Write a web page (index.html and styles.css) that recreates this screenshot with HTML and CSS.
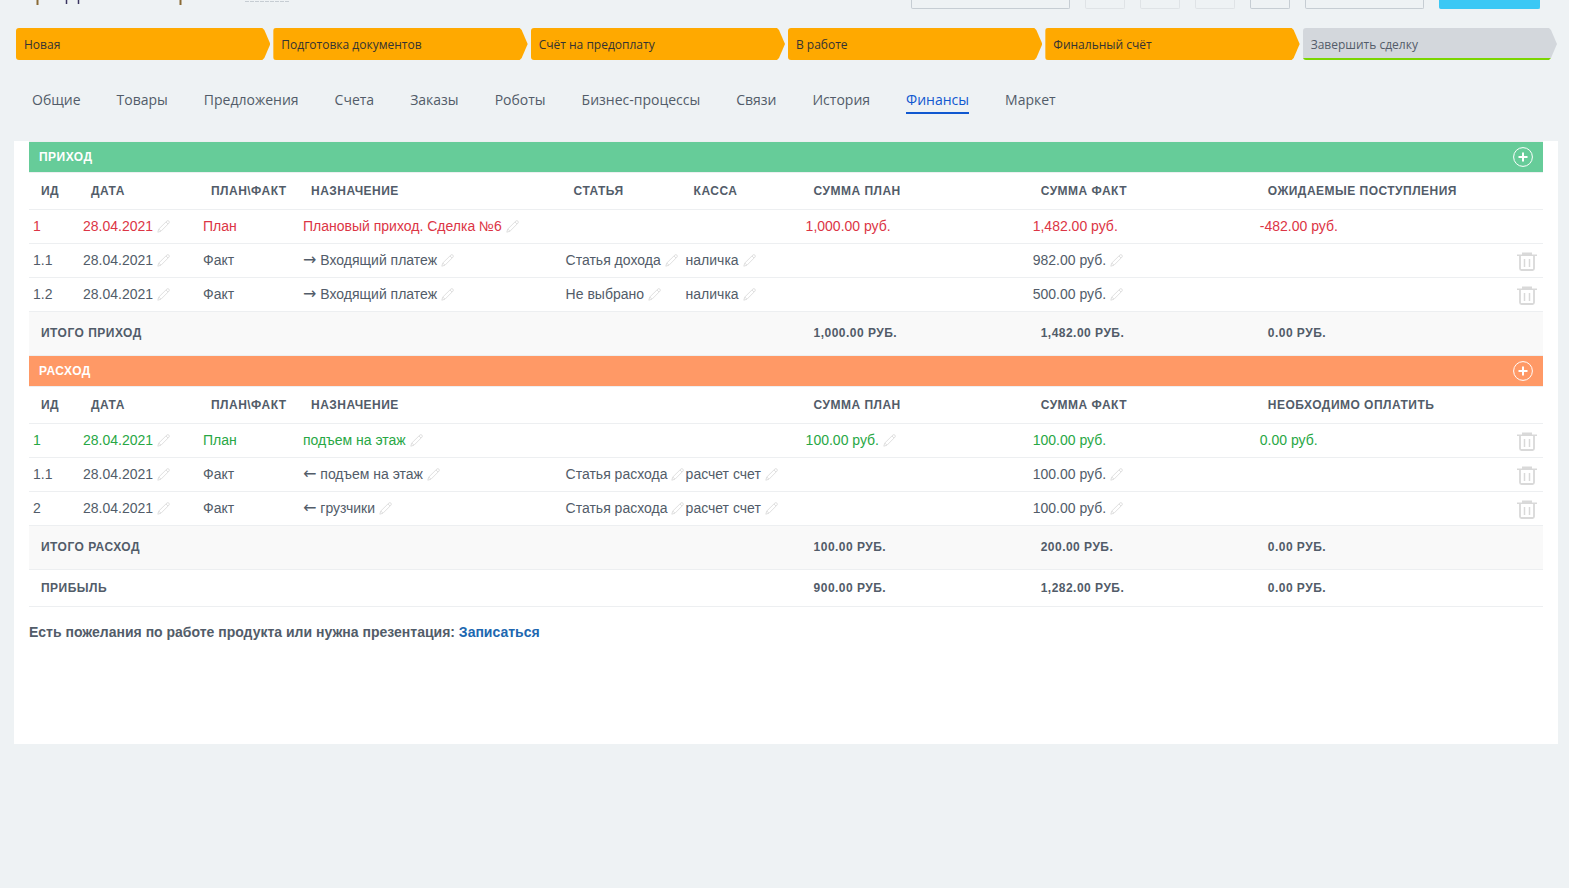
FILE: index.html
```html
<!DOCTYPE html>
<html lang="ru">
  <head>
    <meta charset="utf-8">
    <title>Сделка: финансы</title>
    <link rel="stylesheet" href="styles.css">
  </head>
  <body>
    <svg class="sprite" aria-hidden="true">
      <symbol id="pencil" viewBox="0 0 13 13">
        <path d="M0.800 12.200L1.800 9L10 0.900Q11 0.300 11.900 1.100Q12.700 2 12.100 3L4 11.200zM1.800 9L4 11.200M9 2l2 2" fill="none" stroke="#dcdcdc" stroke-width="0.900" stroke-linejoin="round"/>
      </symbol>
      <symbol id="trash" viewBox="0 0 20 19">
        <path d="M5 0.500h10v2h5v1.500H0V2.500h5z" fill="#d9d9d9"/>
        <path d="M3 3.500V16.500q0 1.500 1.500 1.500h11q1.500 0 1.500-1.500V3.500" fill="none" stroke="#d9d9d9" stroke-width="1.800"/>
        <path d="M7.500 7v8M12.500 7v8" stroke="#d9d9d9" stroke-width="1.500"/>
      </symbol>
      <symbol id="plus" viewBox="0 0 20 20">
        <circle cx="10" cy="10" r="9.400" fill="none" stroke="#fff"/>
        <path d="M10 5.500v9M5.500 10h9" stroke="#fff" stroke-width="2"/>
      </symbol>
    </svg>

    <header class="toolbar">
      <svg class="title-mark" width="260" height="6" viewBox="0 0 260 6" aria-hidden="true">
        <path d="M8.500 0v5M151.500 0v5" stroke="#8a6a35" stroke-width="2"/>
        <path d="M37.500 0v4M49.500 0v4" stroke="#3b3560" stroke-width="1.500"/>
        <path d="M216 1.500h44" stroke="#c6cdd3" stroke-dasharray="4 1"/>
      </svg>
      <button class="tool tool-wide" aria-label="Документ"></button>
      <button class="tool tool-light" aria-label="Печать"></button>
      <button class="tool tool-light" aria-label="Почта"></button>
      <button class="tool tool-light" aria-label="Звонок"></button>
      <button class="tool" aria-label="Настройки"></button>
      <button class="tool tool-medium" aria-label="Сделка"></button>
      <button class="tool tool-primary" aria-label="Маркет"></button>
    </header>

    <div class="stages">
      <button class="stage">Новая</button>
      <button class="stage">Подготовка документов</button>
      <button class="stage">Счёт на предоплату</button>
      <button class="stage">В работе</button>
      <button class="stage">Финальный счёт</button>
      <button class="stage stage-final">Завершить сделку</button>
    </div>

    <nav class="tabs">
      <a href="#">Общие</a>
      <a href="#">Товары</a>
      <a href="#">Предложения</a>
      <a href="#">Счета</a>
      <a href="#">Заказы</a>
      <a href="#">Роботы</a>
      <a href="#">Бизнес-процессы</a>
      <a href="#">Связи</a>
      <a href="#">История</a>
      <a href="#" class="active">Финансы</a>
      <a href="#">Маркет</a>
    </nav>

    <main class="panel">
      <table class="finance">
        <colgroup>
          <col class="col-id">
          <col class="col-date">
          <col class="col-type">
          <col>
          <col class="col-item">
          <col class="col-item">
          <col class="col-sum">
          <col class="col-sum">
          <col class="col-sum">
          <col class="col-actions">
        </colgroup>
        <tbody>
          <tr class="band band-income">
            <th colspan="10">
              <div class="band-inner">Приход <button class="icon" aria-label="Добавить приход"><svg width="20" height="20"><use href="#plus"/></svg></button></div>
            </th>
          </tr>
          <tr class="head">
            <th>ИД</th>
            <th>Дата</th>
            <th>План\Факт</th>
            <th>Назначение</th>
            <th>Статья</th>
            <th>Касса</th>
            <th>Сумма план</th>
            <th>Сумма факт</th>
            <th colspan="2">Ожидаемые поступления</th>
          </tr>
          <tr class="red">
            <td>1</td>
            <td>28.04.2021 <button class="icon" aria-label="Изменить"><svg width="13" height="13"><use href="#pencil"/></svg></button></td>
            <td>План</td>
            <td>Плановый приход. Сделка №6 <button class="icon" aria-label="Изменить"><svg width="13" height="13"><use href="#pencil"/></svg></button></td>
            <td></td>
            <td></td>
            <td>1,000.00 руб.</td>
            <td>1,482.00 руб.</td>
            <td>-482.00 руб.</td>
            <td></td>
          </tr>
          <tr>
            <td>1.1</td>
            <td>28.04.2021 <button class="icon" aria-label="Изменить"><svg width="13" height="13"><use href="#pencil"/></svg></button></td>
            <td>Факт</td>
            <td><span class="arrow">→</span> Входящий платеж <button class="icon" aria-label="Изменить"><svg width="13" height="13"><use href="#pencil"/></svg></button></td>
            <td>Статья дохода <button class="icon" aria-label="Изменить"><svg width="13" height="13"><use href="#pencil"/></svg></button></td>
            <td>наличка <button class="icon" aria-label="Изменить"><svg width="13" height="13"><use href="#pencil"/></svg></button></td>
            <td></td>
            <td>982.00 руб. <button class="icon" aria-label="Изменить"><svg width="13" height="13"><use href="#pencil"/></svg></button></td>
            <td></td>
            <td class="actions"><button class="icon" aria-label="Удалить"><svg width="20" height="19"><use href="#trash"/></svg></button></td>
          </tr>
          <tr>
            <td>1.2</td>
            <td>28.04.2021 <button class="icon" aria-label="Изменить"><svg width="13" height="13"><use href="#pencil"/></svg></button></td>
            <td>Факт</td>
            <td><span class="arrow">→</span> Входящий платеж <button class="icon" aria-label="Изменить"><svg width="13" height="13"><use href="#pencil"/></svg></button></td>
            <td>Не выбрано <button class="icon" aria-label="Изменить"><svg width="13" height="13"><use href="#pencil"/></svg></button></td>
            <td>наличка <button class="icon" aria-label="Изменить"><svg width="13" height="13"><use href="#pencil"/></svg></button></td>
            <td></td>
            <td>500.00 руб. <button class="icon" aria-label="Изменить"><svg width="13" height="13"><use href="#pencil"/></svg></button></td>
            <td></td>
            <td class="actions"><button class="icon" aria-label="Удалить"><svg width="20" height="19"><use href="#trash"/></svg></button></td>
          </tr>
          <tr class="total">
            <th colspan="6">Итого приход</th>
            <th>1,000.00 руб.</th>
            <th>1,482.00 руб.</th>
            <th colspan="2">0.00 руб.</th>
          </tr>
        </tbody>
        <tbody>
          <tr class="band band-expense">
            <th colspan="10">
              <div class="band-inner">Расход <button class="icon" aria-label="Добавить расход"><svg width="20" height="20"><use href="#plus"/></svg></button></div>
            </th>
          </tr>
          <tr class="head">
            <th>ИД</th>
            <th>Дата</th>
            <th>План\Факт</th>
            <th colspan="3">Назначение</th>
            <th>Сумма план</th>
            <th>Сумма факт</th>
            <th colspan="2">Необходимо оплатить</th>
          </tr>
          <tr class="green">
            <td>1</td>
            <td>28.04.2021 <button class="icon" aria-label="Изменить"><svg width="13" height="13"><use href="#pencil"/></svg></button></td>
            <td>План</td>
            <td>подъем на этаж <button class="icon" aria-label="Изменить"><svg width="13" height="13"><use href="#pencil"/></svg></button></td>
            <td></td>
            <td></td>
            <td>100.00 руб. <button class="icon" aria-label="Изменить"><svg width="13" height="13"><use href="#pencil"/></svg></button></td>
            <td>100.00 руб.</td>
            <td>0.00 руб.</td>
            <td class="actions"><button class="icon" aria-label="Удалить"><svg width="20" height="19"><use href="#trash"/></svg></button></td>
          </tr>
          <tr>
            <td>1.1</td>
            <td>28.04.2021 <button class="icon" aria-label="Изменить"><svg width="13" height="13"><use href="#pencil"/></svg></button></td>
            <td>Факт</td>
            <td><span class="arrow">←</span> подъем на этаж <button class="icon" aria-label="Изменить"><svg width="13" height="13"><use href="#pencil"/></svg></button></td>
            <td>Статья расхода <button class="icon" aria-label="Изменить"><svg width="13" height="13"><use href="#pencil"/></svg></button></td>
            <td>расчет счет <button class="icon" aria-label="Изменить"><svg width="13" height="13"><use href="#pencil"/></svg></button></td>
            <td></td>
            <td>100.00 руб. <button class="icon" aria-label="Изменить"><svg width="13" height="13"><use href="#pencil"/></svg></button></td>
            <td></td>
            <td class="actions"><button class="icon" aria-label="Удалить"><svg width="20" height="19"><use href="#trash"/></svg></button></td>
          </tr>
          <tr>
            <td>2</td>
            <td>28.04.2021 <button class="icon" aria-label="Изменить"><svg width="13" height="13"><use href="#pencil"/></svg></button></td>
            <td>Факт</td>
            <td><span class="arrow">←</span> грузчики <button class="icon" aria-label="Изменить"><svg width="13" height="13"><use href="#pencil"/></svg></button></td>
            <td>Статья расхода <button class="icon" aria-label="Изменить"><svg width="13" height="13"><use href="#pencil"/></svg></button></td>
            <td>расчет счет <button class="icon" aria-label="Изменить"><svg width="13" height="13"><use href="#pencil"/></svg></button></td>
            <td></td>
            <td>100.00 руб. <button class="icon" aria-label="Изменить"><svg width="13" height="13"><use href="#pencil"/></svg></button></td>
            <td></td>
            <td class="actions"><button class="icon" aria-label="Удалить"><svg width="20" height="19"><use href="#trash"/></svg></button></td>
          </tr>
          <tr class="total">
            <th colspan="6">Итого расход</th>
            <th>100.00 руб.</th>
            <th>200.00 руб.</th>
            <th colspan="2">0.00 руб.</th>
          </tr>
        </tbody>
        <tfoot>
          <tr class="profit">
            <th colspan="6">Прибыль</th>
            <th>900.00 руб.</th>
            <th>1,282.00 руб.</th>
            <th colspan="2">0.00 руб.</th>
          </tr>
        </tfoot>
      </table>
      <p class="feedback">Есть пожелания по работе продукта или нужна презентация: <a href="#">Записаться</a></p>
    </main>
  </body>
</html>
```

FILE: styles.css
```css
* {
  box-sizing: border-box;
}

body {
  margin: 0;
  background: #eef2f4;
  color: #525c69;
  font-family: "Liberation Sans", Arial, sans-serif;
  font-size: 14px;
}

button {
  font-family: inherit;
  cursor: pointer;
}

.sprite {
  display: none;
}

/* bottom edge of the scrolled toolbar */
.toolbar {
  display: flex;
  gap: 15px;
  padding: 0 29px;
}

.title-mark {
  margin-right: auto;
}

.tool {
  width: 40px;
  height: 9px;
  padding: 0;
  background: none;
  border: 1px solid #c6cdd3;
  border-top: 0;
  border-radius: 0 0 2px 2px;
}

.tool-light {
  border-color: #dfe3e6;
}

.tool-wide {
  width: 159px;
}

.tool-medium {
  width: 119px;
}

.tool-primary {
  width: 101px;
  background: #3bc8f5;
  border-color: #3bc8f5;
}

.stages {
  display: grid;
  grid-template-columns: repeat(6, 1fr);
  gap: 3px;
  padding: 19px 12px 0 16px;
}

.stage {
  height: 32px;
  padding: 0 8px;
  border: 0;
  border-radius: 3px 0 0 3px;
  background: #ffa900;
  color: #333;
  font-family: "Open Sans", sans-serif;
  font-size: 12px;
  text-align: left;
  clip-path: polygon(0 0, calc(100% - 8px) 0, calc(100% - 6px) 2px, 100% 50%, calc(100% - 6px) 30px, calc(100% - 8px) 100%, 0 100%);
}

.stage-final {
  background: linear-gradient(#d3d7dc 30px, #7bd500 30px);
  color: #535c69;
}

.tabs {
  display: flex;
  gap: 36px;
  padding: 28px 32px 27px;
  font-family: "Open Sans", sans-serif;
  font-size: 14px;
  line-height: 24px;
}

.tabs a {
  border-bottom: 2px solid transparent;
  color: #525c69;
  text-decoration: none;
}

.tabs .active {
  border-color: #1058d0;
  color: #1058d0;
}

.panel {
  min-height: 603px;
  margin: 0 11px 0 14px;
  padding: 0 15px;
  background: #fff;
}

.finance {
  width: 100%;
  table-layout: fixed;
  border-spacing: 0;
  border-bottom: 1px solid #edeff1;
}

.col-id {
  width: 50px;
}

.col-date,
.col-item {
  width: 120px;
}

.col-type {
  width: 100px;
}

.col-sum {
  width: 15%;
}

.col-actions {
  width: 60px;
}

.finance th,
.finance td {
  height: 34px;
  padding: 0 0 2px 4px;
  border-top: 1px solid #edeff1;
  text-align: left;
  white-space: nowrap;
}

.finance th {
  height: 37px;
  padding: 0 0 0 12px;
  font-size: 12px;
  letter-spacing: 0.04em;
  text-transform: uppercase;
}

.finance .band th {
  height: 31px;
  padding: 0 10px;
  color: #fff;
}

.band-inner {
  display: flex;
  align-items: center;
  justify-content: space-between;
}

.band-income {
  background: #66cc99;
}

.band-expense {
  background: #ff9966;
}

.finance .total th {
  height: 44px;
  padding-bottom: 2px;
  background: #f9f9f9;
}

.red {
  color: #dc3545;
}

.green {
  color: #28a745;
}

.arrow {
  font-family: "DejaVu Sans", sans-serif;
  font-size: 16px;
  line-height: 1;
}

.icon {
  padding: 0;
  border: 0;
  background: none;
  vertical-align: middle;
}

.icon svg {
  display: block;
}

.finance .actions {
  padding: 2px 6px 0 0;
  text-align: right;
}

.feedback {
  margin: 15px 0;
  font-weight: bold;
  line-height: 20px;
}

.feedback a {
  color: #2067b0;
  text-decoration: none;
}
```
